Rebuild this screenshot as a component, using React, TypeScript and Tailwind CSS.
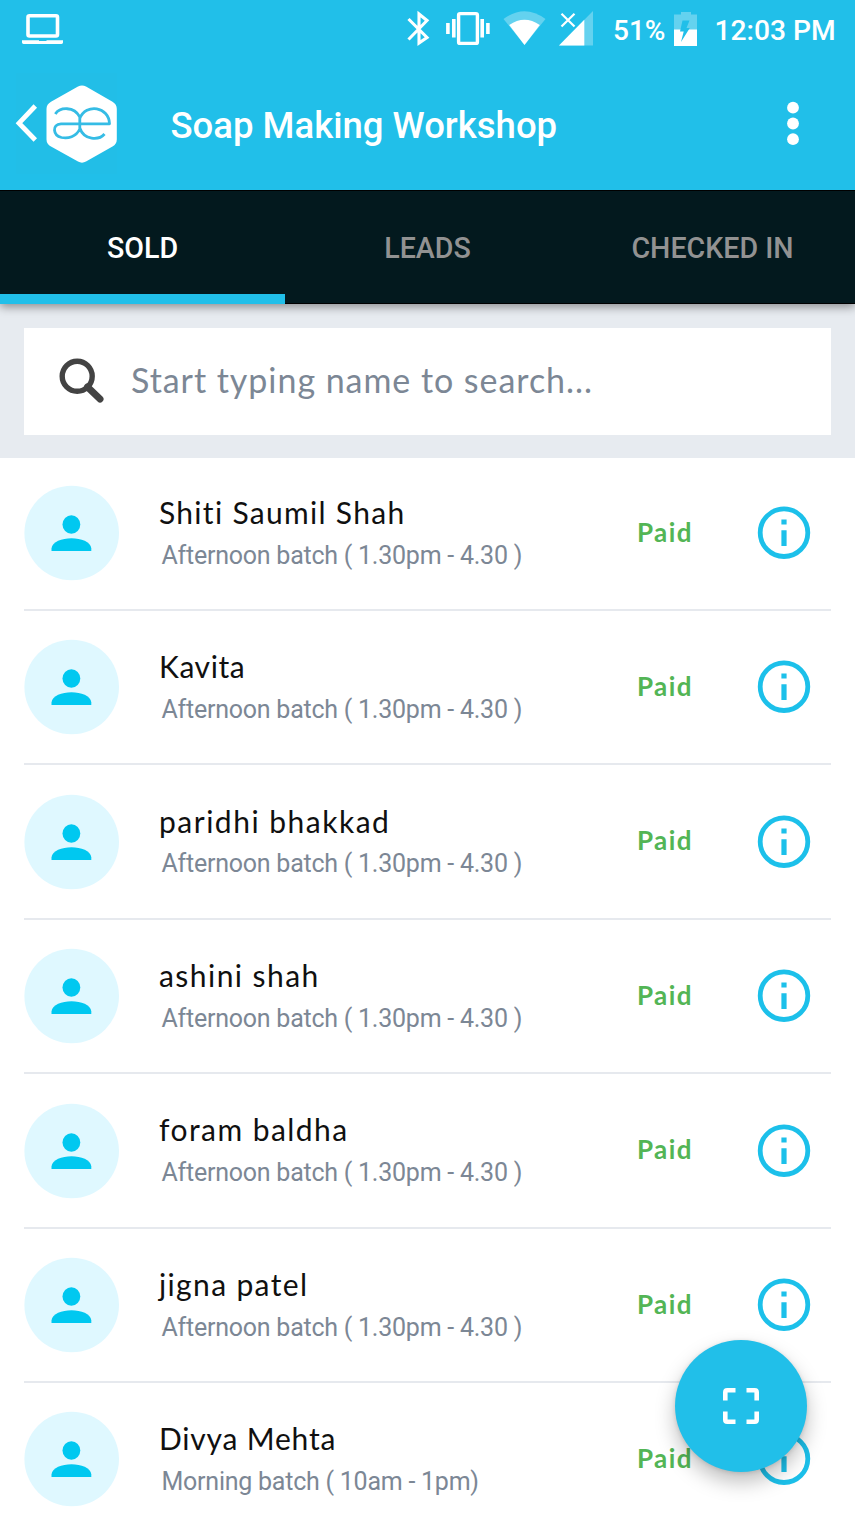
import React from "react";

type Attendee = { name: string; batch: string; nameSpacing: string };

const AFTERNOON = "Afternoon batch ( 1.30pm - 4.30 )";

const attendees: Attendee[] = [
  { name: "Shiti Saumil Shah", batch: AFTERNOON, nameSpacing: "tracking-[1.3px]" },
  { name: "Kavita", batch: AFTERNOON, nameSpacing: "tracking-[0.6px]" },
  { name: "paridhi bhakkad", batch: AFTERNOON, nameSpacing: "tracking-[1.5px]" },
  { name: "ashini shah", batch: AFTERNOON, nameSpacing: "tracking-[1.45px]" },
  { name: "foram baldha", batch: AFTERNOON, nameSpacing: "tracking-[1.45px]" },
  { name: "jigna patel", batch: AFTERNOON, nameSpacing: "tracking-[1.35px]" },
  { name: "Divya Mehta", batch: "Morning batch ( 10am - 1pm)", nameSpacing: "tracking-[0.8px]" },
];

const tabs = [
  { label: "SOLD", active: true },
  { label: "LEADS", active: false },
  { label: "CHECKED IN", active: false },
];

function StatusIcons() {
  return (
    <svg width="190" height="60" viewBox="405 0 190 60" fill="none" className="shrink-0">
      <path d="M408.5 19 L427 37.500 L419 43 V14 L427 20.500 L408.5 39.5" stroke="#fff" strokeWidth="3.1" />
      <rect x="458.6" y="13.6" width="18.8" height="29.8" rx="1.5" stroke="#fff" strokeWidth="3.4" />
      <path d="M453.800 19V37.5M482.200 19V37.5M447.9 23V34M487.9 23V34" stroke="#fff" strokeWidth="3.6" />
      <path d="M503.5 19 Q524.5 3.5 545.5 19 L524.5 45Z" fill="#fff" fillOpacity=".3" />
      <path d="M509.2 25 Q524.5 14.5 539.8 25 L524.5 45Z" fill="#fff" />
      <path d="M593 11V45.5H559Z" fill="#fff" fillOpacity=".3" />
      <path d="M584.3 19.8V45.5H559Z" fill="#fff" />
      <path d="M561.5 13.7L574.5 26.5M574.5 13.7L561.5 26.5" stroke="#fff" strokeWidth="2.2" />
    </svg>
  );
}

function BatteryIcon() {
  return (
    <svg width="24" height="36" viewBox="0 0 24 36" className="shrink-0">
      <path d="M7 1h10v2.5h6V19H0V3.5h7z" fill="#fff" fillOpacity=".3" />
      <path d="M0 18.5h23V35H0z" fill="#fff" />
      <path d="M8.5 9.5H15.5L12.5 17H15.8L7 31L9.7 20.5H6Z" fill="#21bfe9" />
    </svg>
  );
}

function Logo() {
  return (
    <svg width="104" height="102" viewBox="15 73 104 102" fill="none" className="shrink-0">
      <rect x="16" y="73" width="101" height="101" fill="#22bee7" />
      <path d="M35.3 106L19 123.2L35.3 140" stroke="#fff" strokeWidth="4.8" />
      <path d="M78 86.5Q82 84.3 86 86.5L112.5 101.7Q116.8 104.2 116.8 109V139.5Q116.8 144 112.5 146.5L86 161.6Q82 163.8 78 161.6L51 146.5Q46.5 144 46.5 139.5V109Q46.5 104.2 51 101.7Z" fill="#fff" />
      <path d="M55.3 114C60 107 74 106 79.8 117V129C76 137 68 138.8 61.5 137.5C53 135.5 51.5 124.3 61 123.8H109.5C109 106.5 86 103 79.8 118.5V128C84 140.5 99 140.5 104.5 134" stroke="#35bce5" strokeWidth="2.8" strokeLinejoin="round" />
    </svg>
  );
}

function InfoIcon() {
  return (
    <svg width="54" height="54" viewBox="0 0 54 54" className="shrink-0">
      <circle cx="27" cy="26.7" r="23.8" fill="none" stroke="#1cc0ea" strokeWidth="4.8" />
      <path d="M24.4 13.6h5.2v4.8h-5.200zM24.4 24.200h5.200v15.800h-5.200z" fill="#1cc0ea" />
    </svg>
  );
}

function Row({ person }: { person: Attendee }) {
  return (
    <li className="flex h-[154.4px] items-start border-b-[2.4px] border-[#e6e9ee]">
      <svg width="96" height="96" viewBox="0 0 96 96" className="mt-[28.4px] shrink-0">
        <circle cx="47.7" cy="48" r="47.3" fill="#dff8ff" />
        <ellipse cx="47.4" cy="39.5" rx="8.9" ry="9.3" fill="#00c8f0" />
        <path d="M27.5 66V63.5C29 49.8 66 49.8 67.3 63.5V66Z" fill="#00c8f0" />
      </svg>
      <div className="ml-[39px] w-[478px] pt-[37.2px]">
        <div className={`font-[Lato] text-[30px] leading-[36px] text-[#101010] ${person.nameSpacing}`}>{person.name}</div>
        <div className="mt-[10.8px] ml-[2.5px] font-[Roboto] text-[25px] leading-[30px] tracking-[-0.24px] text-[#7c8795]">
          {person.batch}
        </div>
      </div>
      <div className="w-[120px] pt-[60px] font-[Lato] text-[26px] leading-[31px] font-bold tracking-[1.4px] text-[#53b555]">Paid</div>
      <div className="-ml-[0.3px] pt-[49.5px]">
        <InfoIcon />
      </div>
    </li>
  );
}

export default function App() {
  return (
    <div className="relative flex h-[1520px] w-[855px] flex-col overflow-hidden bg-white font-[Roboto]">
      <header className="relative z-20 flex h-[190px] shrink-0 flex-col bg-[#21bfe9] text-white">
        <div className="flex h-[60px] items-center">
          <svg width="44" height="32" viewBox="21 13 44 32" fill="none" className="-mt-[2px] ml-[21px] shrink-0">
            <rect x="28" y="15.7" width="29.5" height="20.3" rx="1.5" stroke="#fff" strokeWidth="3.6" />
            <path d="M22 40.2H39V41H46.5V40.2H63V42.5Q63 43.9 61.5 43.9H23.5Q22 43.9 22 42.5Z" fill="#fff" />
          </svg>
          <div className="ml-[340px] flex">
            <StatusIcons />
          </div>
          <span className="ml-[18px] w-[61px] pt-px text-[28px] leading-[60px] font-medium whitespace-nowrap">51%</span>
          <div className="-mt-[3px] flex">
            <BatteryIcon />
          </div>
          <span className="ml-[16.5px] pt-px text-[28.2px] leading-[60px] font-medium whitespace-nowrap">12:03 PM</span>
        </div>
        <div className="flex h-[130px] items-center">
          <div className="-mt-[2px] ml-[15px] flex">
            <Logo />
          </div>
          <h1 className="ml-[51.5px] w-[610.5px] pt-[2px] text-[36.5px] leading-[44px] font-medium whitespace-nowrap">Soap Making Workshop</h1>
          <svg width="24" height="50" viewBox="0 0 24 50" fill="#fff" className="shrink-0">
            <circle cx="12" cy="7.7" r="5.9" />
            <circle cx="12" cy="23.5" r="5.9" />
            <circle cx="12" cy="39.2" r="5.9" />
          </svg>
        </div>
      </header>
      <nav className="relative z-10 grid h-[114px] shrink-0 grid-cols-3 bg-[#03191e] text-center text-[28.6px] font-medium shadow-[0_3px_9px_rgba(0,0,0,0.4)]">
        {tabs.map((tab) => (
          <div
            key={tab.label}
            className={
              tab.active
                ? "h-[114px] border-t border-b-[10px] border-t-black border-b-[#21bfe9] leading-[115px] text-white"
                : "h-[114px] border-y border-black leading-[115px] text-[#929292]"
            }
          >
            {tab.label}
          </div>
        ))}
      </nav>
      <section className="h-[154.4px] shrink-0 bg-[#e7ebf0] p-[24px]">
        <div className="flex h-[106.5px] items-center bg-white">
          <svg width="50" height="50" viewBox="0 0 50 50" fill="none" stroke="#434343" className="mt-px ml-[34px] shrink-0">
            <circle cx="19.2" cy="19.3" r="15" strokeWidth="5.4" />
            <path d="M29.5 30L42 42" strokeWidth="7" strokeLinecap="round" />
          </svg>
          <span className="-mt-[2px] ml-[23px] font-[Lato] text-[34px] leading-[42px] tracking-[0.95px] text-[#7c8795]">
            Start typing name to search...
          </span>
        </div>
      </section>
      <ul className="-mt-[1.8px] flex flex-col px-[24px]">
        {attendees.map((person) => (
          <Row key={person.name} person={person} />
        ))}
      </ul>
      <button className="absolute top-[1340px] left-[675px] flex h-[132px] w-[132px] items-center justify-center rounded-full bg-[#21bfe9] shadow-[0_10px_20px_rgba(0,0,0,0.25),0_1px_4px_rgba(0,0,0,0.12)]">
        <svg width="36" height="36" viewBox="0 0 36 36" fill="none" stroke="#fff" strokeWidth="4.6">
          <path d="M12.5 2.3H4.3Q2.3 2.3 2.3 4.3V12.5M23.5 2.3H31.7Q33.7 2.3 33.7 4.3V12.5M12.5 33.7H4.3Q2.3 33.7 2.3 31.7V23.5M23.5 33.7H31.7Q33.7 33.7 33.7 31.7V23.5" />
        </svg>
      </button>
    </div>
  );
}
